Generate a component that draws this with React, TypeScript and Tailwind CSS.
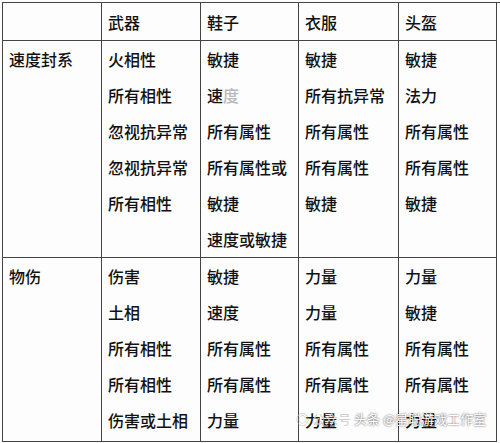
import React from 'react';

type Cell = (string | React.ReactNode)[];

const header = ['', '武器', '鞋子', '衣服', '头盔'];

const rows: { name: string; height: string; cols: Cell[] }[] = [
  {
    name: '速度封系',
    height: 'h-[217px]',
    cols: [
      ['火相性', '所有相性', '忽视抗异常', '忽视抗异常', '所有相性'],
      [
        '敏捷',
        <span key="sd">
          速<span className="text-[#b8b8b8]">度</span>
        </span>,
        '所有属性',
        '所有属性或',
        '敏捷',
        '速度或敏捷',
      ],
      ['敏捷', '所有抗异常', '所有属性', '所有属性', '敏捷'],
      ['敏捷', '法力', '所有属性', '所有属性', '敏捷'],
    ],
  },
  {
    name: '物伤',
    height: 'h-[184px]',
    cols: [
      ['伤害', '土相', '所有相性', '所有相性', '伤害或土相'],
      ['敏捷', '速度', '所有属性', '所有属性', '力量'],
      ['力量', '力量', '所有属性', '所有属性', '力量'],
      ['力量', '敏捷', '所有属性', '所有属性', '力量'],
    ],
  },
];

export default function App() {
  return (
    <div
      className="relative w-[500px] h-[443px] overflow-hidden bg-[#fdfdfd] pt-[2px] pl-[2px] text-[16px] font-medium text-[#111]"
      style={{ fontFamily: '"Noto Sans CJK SC", "Noto Sans", sans-serif' }}
    >
      <div className="grid grid-cols-[99px_99px_98px_100px_98px] border-l border-t border-[#444]">
        {header.map((h, i) => (
          <div key={i} className="h-[38px] border-r border-b border-[#444] px-[6px] leading-[38px]">
            {h}
          </div>
        ))}
        {rows.map((row) => (
          <React.Fragment key={row.name}>
            <div className={`${row.height} border-r border-b border-[#444] px-[6px] leading-[36px]`}>
              {row.name}
            </div>
            {row.cols.map((col, ci) => (
              <div key={ci} className={`${row.height} border-r border-b border-[#444] px-[6px] leading-[36px]`}>
                {col.map((t, ti) => (
                  <div key={ti}>{t}</div>
                ))}
              </div>
            ))}
          </React.Fragment>
        ))}
      </div>

      {/* watermark */}
      <div className="absolute left-[296px] top-[412px] flex items-center gap-[3px] whitespace-nowrap text-[13px] font-normal leading-none">
        <span className="text-[#bbb]">◎</span>
        <span className="text-[#cfcfcf]">公众号</span>
        <span className="text-white [text-shadow:0_0_2px_rgba(0,0,0,0.8)]">头条 @星聪游戏工作室</span>
      </div>
    </div>
  );
}
